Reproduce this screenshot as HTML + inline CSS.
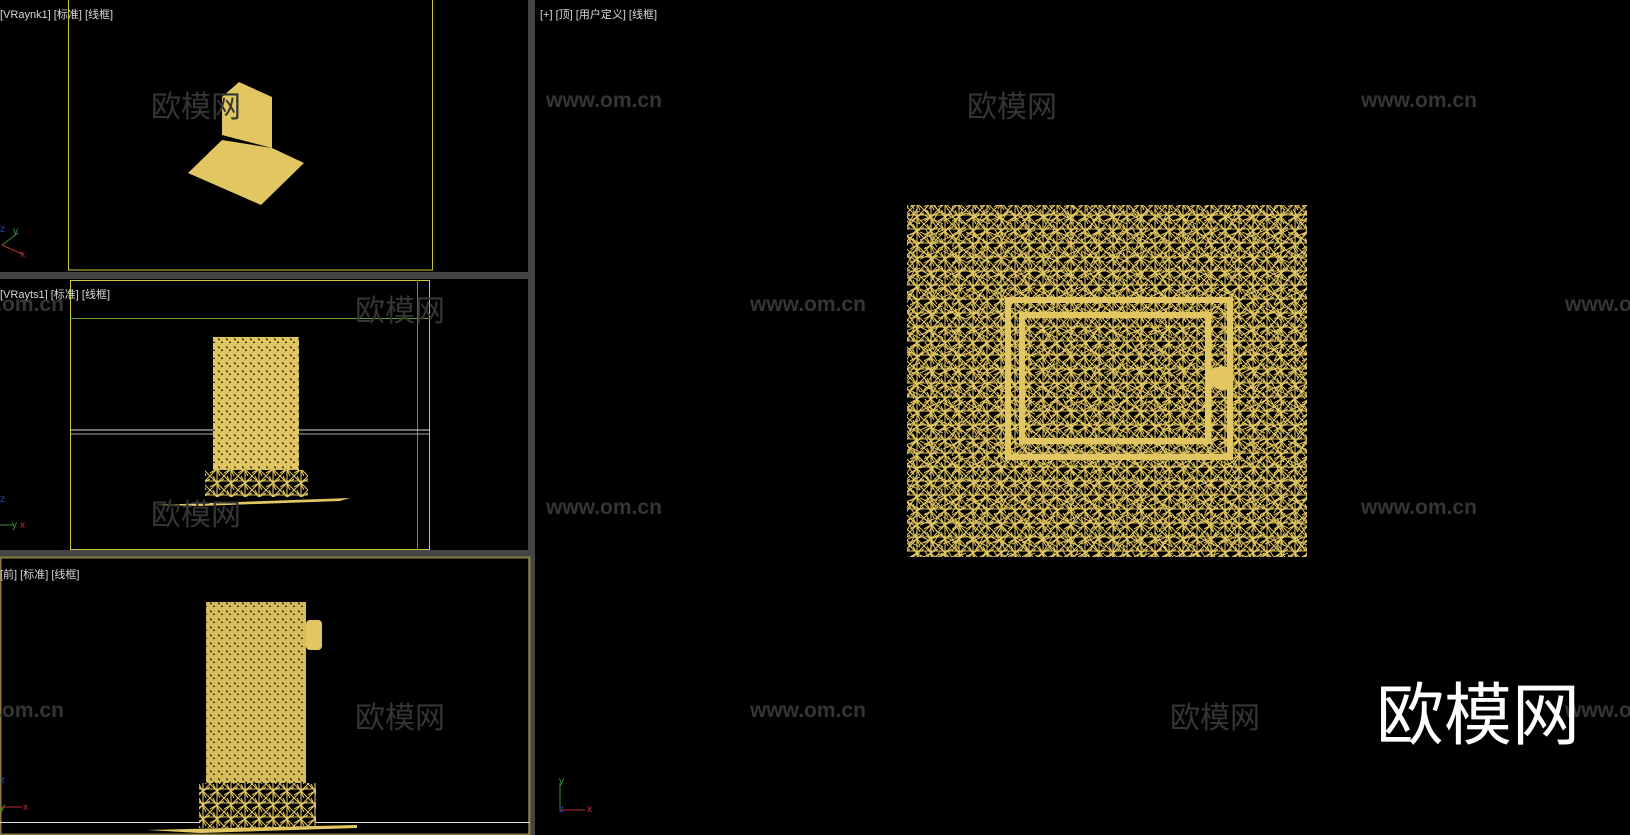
<!DOCTYPE html>
<html><head><meta charset="utf-8"><style>
html,body{margin:0;padding:0;background:#000;}
body{width:1630px;height:835px;position:relative;overflow:hidden;font-family:"Liberation Sans","Noto Sans CJK SC",sans-serif;}
.lbl{position:absolute;color:#d8d8d8;font-size:11px;white-space:nowrap;}
.wm{position:absolute;color:#353535;font-weight:bold;white-space:nowrap;}
.w1{font-size:21px;}
.w2{font-size:30px;font-weight:normal;}
</style></head><body>
<svg width="1630" height="835" style="position:absolute;left:0;top:0">
<defs>
<pattern id="mesh" width="14" height="14" patternUnits="userSpaceOnUse">
<rect width="14" height="14" fill="#000"/>
<path d="M0 0L14 14M14 0L0 14M0 5H14M7 0V14M0 11L14 3M3 0L10 14" stroke="#e2c661" stroke-width="1.1"/>
</pattern>
<pattern id="meshb" width="23" height="19" patternUnits="userSpaceOnUse">
<path d="M0 4L23 15M5 0L17 19M0 12L23 2M20 0L9 19" stroke="#e2c661" stroke-width="1"/>
</pattern>
<pattern id="mesh2" width="8" height="8" patternUnits="userSpaceOnUse">
<rect width="8" height="8" fill="#e2c661"/>
<path d="M2 2l2 1-1 2zM6 5l1 2-2 0z" fill="#000"/>
</pattern>
</defs>
<rect x="528" y="0" width="7" height="835" fill="#454545"/>
<rect x="0" y="272" width="530" height="7" fill="#454545"/>
<rect x="0" y="550" width="530" height="7" fill="#454545"/>
<rect x="0.5" y="557.5" width="529" height="277" fill="none" stroke="#8a7a40" stroke-width="2"/>
<rect x="68.5" y="-1" width="364" height="271" fill="none" stroke="#c8c83a"/>
<polygon points="239,82 272,97 272,148 222,135 222,97" fill="#e2c661"/>
<polygon points="188,173 222,140 272,148 304,163 261,205" fill="#e2c661"/>
<rect x="70.5" y="280.5" width="359" height="269" fill="none" stroke="#c8c83a"/>
<line x1="70" y1="318.5" x2="430" y2="318.5" stroke="#6a9a2a"/>
<line x1="417.5" y1="280" x2="417.5" y2="550" stroke="#6a9a2a"/>
<line x1="70" y1="430" x2="430" y2="430" stroke="#ddd"/>
<line x1="70" y1="434" x2="430" y2="434" stroke="#aaa"/>
<rect x="213" y="337" width="86" height="133" fill="url(#mesh2)"/>
<rect x="205" y="470" width="103" height="27" fill="url(#mesh)"/>
<polygon points="153,505 350,498 340,501 200,506" fill="#e2c661"/>
<line x1="0" y1="822.5" x2="530" y2="822.5" stroke="#ddd"/>
<rect x="206" y="602" width="100" height="181" fill="url(#mesh2)" opacity="0.95"/>
<rect x="306" y="620" width="16" height="30" rx="4" fill="#e2c661"/>
<rect x="199" y="783" width="117" height="45" fill="url(#mesh)"/>
<polygon points="147,830 357,825 357,828 200,833" fill="#e2c661"/>
<rect x="907" y="205" width="400" height="352" fill="url(#mesh)"/>
<rect x="907" y="205" width="400" height="352" fill="url(#meshb)"/>
<rect x="1008" y="300" width="222" height="157" fill="none" stroke="#e2c661" stroke-width="6"/>
<rect x="1022" y="315" width="186" height="126" fill="none" stroke="#e2c661" stroke-width="6"/>
<circle cx="1222" cy="378" r="12" fill="#e2c661"/>
<g stroke-width="1">
<line x1="2" y1="245" x2="18" y2="233" stroke="#3a8a3a"/><line x1="2" y1="245" x2="22" y2="254" stroke="#b03030"/>
<line x1="0" y1="525" x2="14" y2="525" stroke="#3a8a3a"/>
<line x1="0" y1="807" x2="22" y2="807" stroke="#b03030"/>
<line x1="560" y1="810" x2="560" y2="783" stroke="#3a8a3a"/><line x1="560" y1="810" x2="585" y2="810" stroke="#b03030"/>
</g>
<g font-size="10" font-family="Liberation Sans">
<text x="0" y="232" fill="#3040c0">z</text><text x="13" y="234" fill="#3a9a3a">y</text><text x="20" y="257" fill="#c03030">x</text>
<text x="0" y="502" fill="#3040c0">z</text><text x="12" y="528" fill="#3a9a3a">y</text><text x="20" y="528" fill="#c03030">x</text>
<text x="0" y="783" fill="#3040c0">z</text><text x="0" y="810" fill="#3a9a3a">y</text><text x="23" y="810" fill="#c03030">x</text>
<text x="559" y="784" fill="#3a9a3a">y</text><text x="559" y="812" fill="#3040c0">z</text><text x="587" y="812" fill="#c03030">x</text>
</g>
</svg>
<div class="lbl" style="left:0;top:6px">[VRaynk1] [标准] [线框]</div>
<div class="lbl" style="left:0;top:286px">[VRayts1] [标准] [线框]</div>
<div class="lbl" style="left:0;top:566px">[前] [标准] [线框]</div>
<div class="lbl" style="left:540px;top:6px">[+] [顶] [用户定义] [线框]</div>

<div class="wm w2" style="left:151px;top:82px">欧模网</div>
<div class="wm w2" style="left:967px;top:82px">欧模网</div>
<div class="wm w2" style="left:355px;top:286px">欧模网</div>
<div class="wm w2" style="left:151px;top:490px">欧模网</div>
<div class="wm w2" style="left:355px;top:693px">欧模网</div>
<div class="wm w2" style="left:1170px;top:693px">欧模网</div>
<div class="wm w1" style="left:546px;top:89px">www.om.cn</div>
<div class="wm w1" style="left:1361px;top:89px">www.om.cn</div>
<div class="wm w1" style="left:750px;top:293px">www.om.cn</div>
<div class="wm w1" style="left:1565px;top:293px">www.om.cn</div>
<div class="wm w1" style="left:-52px;top:293px">www.om.cn</div>
<div class="wm w1" style="left:546px;top:496px">www.om.cn</div>
<div class="wm w1" style="left:1361px;top:496px">www.om.cn</div>
<div class="wm w1" style="left:750px;top:699px">www.om.cn</div>
<div class="wm w1" style="left:1565px;top:699px">www.om.cn</div>
<div class="wm w1" style="left:-52px;top:699px">www.om.cn</div>
<div style="position:absolute;left:1376px;top:660px;font-size:68px;color:#fff;white-space:nowrap;font-family:'Liberation Sans','Noto Sans CJK SC',sans-serif;">欧模网</div>
</body></html>
